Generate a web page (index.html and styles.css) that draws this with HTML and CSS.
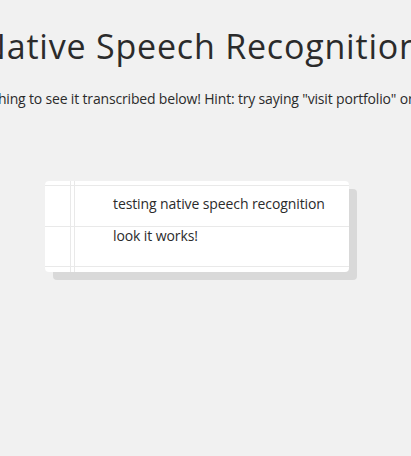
FILE: index.html
```html
<!DOCTYPE html>
<html>
<head>
<meta charset="utf-8">
<link rel="stylesheet" href="styles.css">
</head>
<body>
<main class="page">
  <h1 class="title">Native Speech Recognition</h1>
  <p class="hint">Say something to see it transcribed below! Hint: try saying "visit portfolio" or "github"</p>
  <div class="paper">
    <ul class="lines">
      <li class="line">testing native speech recognition</li>
      <li class="line">look it works!</li>
    </ul>
  </div>
</main>
</body>
</html>
```
FILE: styles.css
```css
html, body {
  margin: 0;
  padding: 0;
  background: #f1f1f1;
}
body {
  font-family: "Open Sans", "Liberation Sans", sans-serif;
  color: #2b2b2b;
}
.page {
  display: flex;
  flex-direction: column;
  align-items: center;
  padding: 26px 10px 40px 0;
  overflow: hidden;
}
.title {
  margin: 0;
  font-size: 34px;
  font-weight: 400;
  line-height: 40px;
  white-space: nowrap;
  letter-spacing: 0.8px;
}
.hint {
  margin: 23px 0 0;
  font-size: 14px;
  line-height: 20px;
  white-space: nowrap;
  letter-spacing: -0.17px;
}
.paper {
  margin-top: 72px;
  margin-right: 7px;
  width: 304px;
  height: 91px;
  background-color: #fff;
  background-image:
    linear-gradient(90deg, transparent 25px, #e9e9e9 25px, #e9e9e9 26px, transparent 26px, transparent 29px, #e9e9e9 29px, #e9e9e9 30px, transparent 30px),
    linear-gradient(180deg, transparent 4px, #e9e9e9 4px, #e9e9e9 5px, transparent 5px, transparent 45px, #e9e9e9 45px, #e9e9e9 46px, transparent 46px, transparent 85px, #e9e9e9 85px, #e9e9e9 86px, transparent 86px);
  border-radius: 4px;
  box-shadow: 8px 8px 0 #d9d9d9;
}
.lines {
  list-style: none;
  margin: 0;
  padding: 7px 0 0 68px;
}
.line {
  font-size: 14px;
  line-height: 32px;
  letter-spacing: -0.1px;
}
```
